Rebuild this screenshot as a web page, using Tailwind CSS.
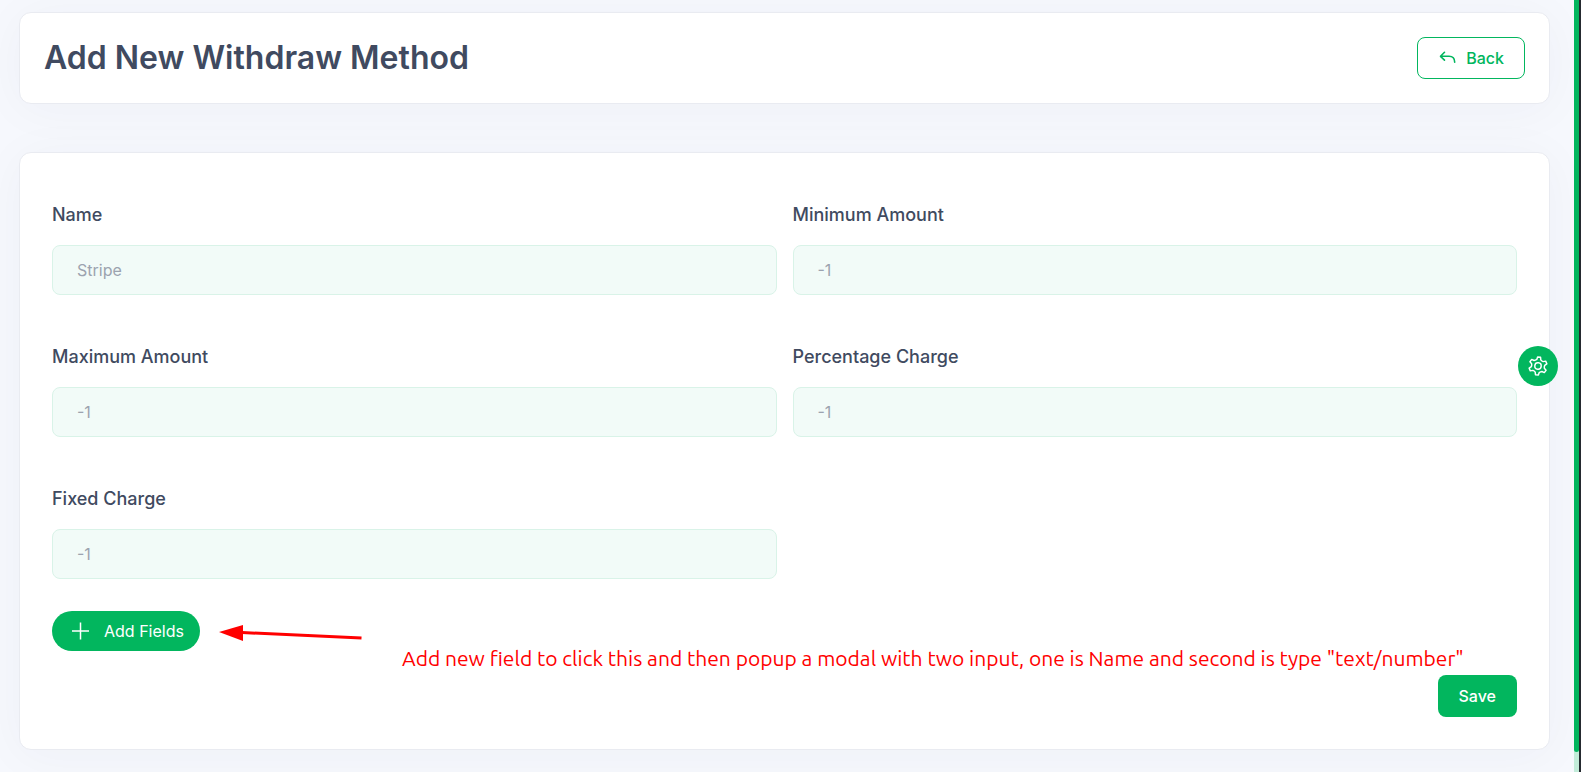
<!DOCTYPE html>
<html lang="en">
<head>
<meta charset="utf-8">
<meta name="viewport" content="width=device-width, initial-scale=1">
<title>Add New Withdraw Method</title>
<script src="https://cdn.jsdelivr.net/npm/@tailwindcss/browser@4"></script>
</head>
<body class="flex min-h-screen overflow-hidden bg-[#f6f8fd] font-['Inter',sans-serif] text-base text-[#404a60]">
<main class="min-w-0 flex-1 pt-3 pr-6 pb-5 pl-[19px]">
  <header class="flex items-center justify-between rounded-xl border border-[#e9ebf1] bg-white p-6 shadow-[0_5px_50px_rgba(60,50,80,0.04)]">
    <h1 class="text-[32px] leading-10 font-semibold">Add New Withdraw Method</h1>
    <a href="#" class="flex h-[42px] items-center gap-2 rounded-lg border border-[#02b65e] px-5 font-medium text-[#02b65e]">
      <svg class="size-5" viewBox="0 0 20 20" fill="none" stroke="currentColor" stroke-width="1.6" stroke-linecap="round" stroke-linejoin="round" aria-hidden="true"><path d="M6.500 4.300 2.500 8.300l4 3.800M2.700 8.300H11c3.700 0 5.700 2 5.700 6"/></svg>
      Back
    </a>
  </header>

  <form class="relative mt-12 rounded-xl border border-[#e9ebf1] bg-white px-8 pt-12 pb-8 shadow-[0_5px_50px_rgba(60,50,80,0.04)]">
    <div class="grid grid-cols-2 gap-x-4 gap-y-12">
      <div class="flex flex-col gap-4">
        <label for="name" class="text-lg font-medium">Name</label>
        <input id="name" type="text" placeholder="Stripe" class="h-[50px] w-full rounded-lg border border-[#d9f3e8] bg-[#f2fbf8] px-6 placeholder:text-[#9ca3af]">
      </div>
      <div class="flex flex-col gap-4">
        <label for="minimum" class="text-lg font-medium">Minimum Amount</label>
        <input id="minimum" type="text" placeholder="-1" class="h-[50px] w-full rounded-lg border border-[#d9f3e8] bg-[#f2fbf8] px-6 placeholder:text-[#9ca3af]">
      </div>
      <div class="flex flex-col gap-4">
        <label for="maximum" class="text-lg font-medium">Maximum Amount</label>
        <input id="maximum" type="text" placeholder="-1" class="h-[50px] w-full rounded-lg border border-[#d9f3e8] bg-[#f2fbf8] px-6 placeholder:text-[#9ca3af]">
      </div>
      <div class="flex flex-col gap-4">
        <label for="percentage" class="text-lg font-medium">Percentage Charge</label>
        <input id="percentage" type="text" placeholder="-1" class="h-[50px] w-full rounded-lg border border-[#d9f3e8] bg-[#f2fbf8] px-6 placeholder:text-[#9ca3af]">
      </div>
      <div class="flex flex-col gap-4">
        <label for="fixed" class="text-lg font-medium">Fixed Charge</label>
        <input id="fixed" type="text" placeholder="-1" class="h-[50px] w-full rounded-lg border border-[#d9f3e8] bg-[#f2fbf8] px-6 placeholder:text-[#9ca3af]">
      </div>
    </div>

    <button type="button" class="mt-8 flex h-10 items-center gap-3 rounded-full bg-[#02b65e] px-4 text-white">
      <svg class="size-6" viewBox="0 0 24 24" fill="none" stroke="currentColor" stroke-width="1.5" aria-hidden="true"><path d="M12.500 3.500v17M4 12h17"/></svg>
      Add Fields
    </button>
    <div class="mt-6 flex justify-end">
      <button type="submit" class="h-[42px] rounded-lg bg-[#02b65e] px-[21px] font-medium text-white">Save</button>
    </div>

    <!-- Annotation over the form -->
    <svg class="absolute bottom-[104px] left-[198px] h-6 w-36" viewBox="0 0 144 24" aria-hidden="true"><path d="M24 11.500 143.500 17" stroke="#f00" stroke-width="3"/><path d="M1 11 25 4v16z" fill="#f00"/></svg>
    <p class="absolute bottom-[77px] left-[382px] font-['Ubuntu','Open_Sans',sans-serif] text-[21px] leading-7 font-normal whitespace-nowrap text-[#f00]">Add new field to click this and then popup a modal with two input, one is Name and second is type "text/number"</p>
  </form>
</main>

<button type="button" aria-label="Settings" class="fixed top-[346px] right-[23px] flex size-10 items-center justify-center rounded-full bg-[#02b65e] text-white">
  <svg class="size-[22px]" viewBox="-12 -12 24 24" fill="none" stroke="currentColor" stroke-width="1.600" stroke-linejoin="round" aria-hidden="true"><g transform="rotate(7)"><path d="M-1.600-9.800H1.600L2.200-7Q3.500-5.800 4.960-5.400L7.690-6.290 9.290-3.510 7.160-1.600Q6.700 0 7.160 1.600L9.290 3.510 7.690 6.290 4.960 5.400Q3.500 5.800 2.200 7L1.600 9.800H-1.600L-2.200 7Q-3.500 5.800-4.960 5.400L-7.690 6.290-9.290 3.510-7.160 1.600Q-6.700 0-7.160-1.600L-9.290-3.510-7.690-6.290-4.960-5.400Q-3.500-5.800-2.200-7Z"/><circle r="3.500"/></g></svg>
</button>

<!-- Scroll track and window edge -->
<div class="flex w-[7px] shrink-0 border-r-2 border-[#252a30] bg-[#c2ecd9]"><div class="mb-5 flex-1 rounded-b-sm bg-[#02b65e]"></div></div>
</body>
</html>
